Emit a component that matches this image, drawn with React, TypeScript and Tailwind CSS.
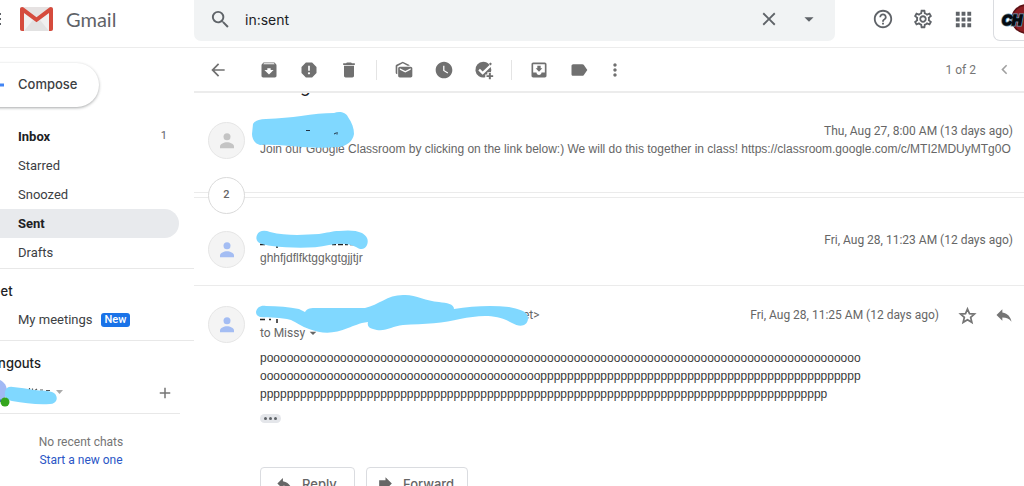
import type { ReactNode } from 'react'
import {
  MdAdd,
  MdApps,
  MdArchive,
  MdArrowBack,
  MdArrowDropDown,
  MdChevronLeft,
  MdClose,
  MdDelete,
  MdForward,
  MdHelpOutline,
  MdLabel,
  MdMarkAsUnread,
  MdMoreVert,
  MdMoveToInbox,
  MdOutlineSettings,
  MdReply,
  MdReport,
  MdSearch,
  MdWatchLater,
} from 'react-icons/md'

const BODY = 'p' + 'o'.repeat(89) + 'o'.repeat(42) + 'p'.repeat(48) + 'p'.repeat(85)
const BODY_LINES = [BODY.slice(0, 90), BODY.slice(90, 180), BODY.slice(180)]

function IconButton({ label, className = '', children }: { label: string; className?: string; children: ReactNode }) {
  return (
    <button type="button" aria-label={label} className={`flex h-10 w-10 shrink-0 items-center justify-center ${className}`}>
      {children}
    </button>
  )
}

function GmailLogo() {
  return (
    <svg viewBox="0 0 33 24" className="h-6 w-[33px] shrink-0" aria-hidden="true">
      <rect x="0" y="0" width="33" height="24" rx="2" fill="#e9e9e9" />
      <path d="M4 24V6l12.500 9L29 6v18z" fill="#f0f0f0" />
      <path d="M4 24l9-11 3.500 2.500L20 13l9 11z" fill="#e2e2e2" />
      <path d="M2 0L16.500 11 31 0z" fill="#e6e2e2" />
      <path d="M0 2.200C0 .9 1 0 2.200 0c.6 0 1 .2 1.400.5L16.500 10.300 29.400.5c.4-.3.8-.5 1.400-.5C32 0 33 .9 33 2.200V22c0 1.200-.8 2-2 2h-2V6L16.500 15.300 4 6v18H2c-1.200 0-2-.8-2-2z" fill="#d54b3d" />
    </svg>
  )
}

function AddTaskIcon() {
  return (
    <svg viewBox="0 0 24 24" className="h-5 w-5" fill="currentColor" aria-hidden="true">
      <path d="M11 2a9.500 9.500 0 1 0 2.500 18.700V17.500H16v-2.700h4.300A9.500 9.500 0 0 0 20 8.500l-9.600 9.200-5.200-5.200 1.900-1.900 3.300 3.300 8.200-8A9.500 9.500 0 0 0 11 2z" />
      <path d="M17.800 15.500h2.400v2.700H23v2.300h-2.800v2.700h-2.400v-2.700H15v-2.300h2.800zM18 4.500l2-1.500 1.500 1.700-2 2z" />
    </svg>
  )
}

function StarIcon() {
  return (
    <svg viewBox="0 0 24 24" className="h-[19px] w-[19px]" fill="none" stroke="currentColor" strokeWidth="2.200" aria-hidden="true">
      <path d="M12 3.800l2.500 5.900 6.300.5-4.800 4.200 1.500 6.200-5.500-3.300-5.500 3.300L8 14.400l-4.800-4.200 6.300-.5z" />
    </svg>
  )
}

function Avatar({ color }: { color: string }) {
  return (
    <div className={`flex h-[37px] w-[37px] shrink-0 items-center justify-center rounded-full border border-[#e6e6e6] bg-[#f4f4f4] ${color}`}>
      <svg viewBox="0 0 14 16" className="h-4 w-[14px]" fill="currentColor" aria-hidden="true">
        <circle cx="7" cy="3.700" r="3.500" />
        <path d="M0 15.200v-1.700C0 11 4 9.300 7 9.300s7 1.700 7 4.200v1.700z" />
      </svg>
    </div>
  )
}

function NavItem({ label, count, active, bold }: { label: string; count?: string; active?: boolean; bold?: boolean }) {
  return (
    <a
      href="#"
      className={`mr-[15px] flex h-[29px] items-center rounded-r-full pr-3 pl-[46px] text-[13px] ${active ? 'bg-[#e8eaed]' : ''} ${bold ? 'font-bold text-[#202124]' : 'text-[#3c4043]'}`}
    >
      <span className="flex-1">{label}</span>
      {count && <span className="text-[11px] font-normal text-[#5f6368]">{count}</span>}
    </a>
  )
}

function Sidebar() {
  return (
    <aside className="w-[194px] shrink-0 overflow-hidden">
      <div className="-ml-7 flex flex-col">
        <button
          type="button"
          className="mt-[15px] mb-[15px] flex h-[44px] w-[127px] items-center rounded-full pl-2 font-['Inter',sans-serif] text-[13px] font-medium text-[#3c4043] shadow-[0_1px_3px_rgba(60,64,67,0.45)]"
        >
          <svg viewBox="0 0 24 24" className="mr-[14px] h-6 w-6" aria-hidden="true">
            <path d="M0 10.500h24v3H0z" fill="#4285f4" />
          </svg>
          Compose
        </button>
        <nav className="flex flex-col pb-px">
          <NavItem label="Inbox" count="1" bold />
          <NavItem label="Starred" />
          <NavItem label="Snoozed" />
          <NavItem label="Sent" active bold />
          <NavItem label="Drafts" />
        </nav>
        <section className="border-y border-[#e8e8e8] pt-3 pb-[6px]">
          <h2 className="pl-[9px] font-['Inter',sans-serif] text-[13px] leading-5 font-medium text-[#202124]">Meet</h2>
          <a href="#" className="mt-1 flex h-[29px] items-center gap-2 pl-[46px] text-[13px] text-[#3c4043]">
            My meetings
            <span className="rounded-[3px] bg-[#1a73e8] px-1 text-[11px] leading-[14px] font-medium text-white">New</span>
          </a>
        </section>
        <section className="pt-3">
          <h2 className="pl-[9px] font-['Inter',sans-serif] text-[13px] leading-5 font-medium text-[#202124]">Hangouts</h2>
          <div className="relative mr-[14px] flex h-[41px] items-center justify-end border-b border-[#e8e8e8] pr-[6px] text-[#757575]">
            <svg viewBox="0 0 80 40" className="absolute top-0 left-7 h-10 w-20" aria-hidden="true">
              <circle cx="-5" cy="18" r="12" fill="#a1b9f5" />
              <path d="M-6 25q6-2 8 4H-6z" fill="#4169c9" />
              <path d="M26 17.500h2.500M29.500 15v3M32.500 15.500v2M35 17.500l2-1.500M40 17h3M46 17.500h4" stroke="#555" strokeWidth="1.200" />
              <path d="M5 19q1-6 8-5 11 1 21 3c7 1 15 0 20 3 5 4 3 11-4 11-13 1-25-1-38-3-5-1-8-4-7-9z" fill="#80d8ff" />
              <circle cx="5" cy="29" r="4.500" fill="#34a51d" />
              <path d="M56 17h7l-3.500 4z" fill="#aaa" />
            </svg>
            <button type="button" aria-label="New conversation">
              <MdAdd size={18} />
            </button>
          </div>
          <div className="mr-[14px] ml-7 flex flex-col items-center pt-[19px] pr-[18px] text-[12px] leading-[18px]">
            <span className="text-[#757575]">No recent chats</span>
            <a href="#" className="text-[#2a56c6]">Start a new one</a>
          </div>
        </section>
      </div>
    </aside>
  )
}

function Header() {
  return (
    <header className="flex h-12 shrink-0 border-b border-[#ececec]">
      <div className="flex h-[38px] w-[194px] shrink-0 items-center">
        <svg viewBox="0 0 2 14" className="mr-[18px] h-[14px] w-[2px] text-[#5f6368]" fill="currentColor" aria-hidden="true">
          <path d="M0 1h1v2H0zM0 6h1v2H0zM0 11h1v2H0z" />
        </svg>
        <GmailLogo />
        <span className="ml-[13px] font-['Lato',sans-serif] text-[20px] text-[#5f6368]">Gmail</span>
      </div>
      <form className="flex h-[41px] min-w-0 flex-1 items-center rounded-b-[7px] bg-[#f1f3f4] px-[6px] pb-[3px] text-[#5f6368]">
        <IconButton label="Search">
          <MdSearch size={23} />
        </IconButton>
        <input
          aria-label="Search mail"
          defaultValue="in:sent"
          className="ml-[5px] min-w-0 flex-1 bg-transparent font-['Inter',sans-serif] text-[14px] text-[#202124] outline-none"
        />
        <IconButton label="Clear search">
          <MdClose size={22} />
        </IconButton>
        <IconButton label="Search options">
          <MdArrowDropDown size={22} />
        </IconButton>
      </form>
      <div className="flex h-[41px] w-[189px] shrink-0 text-[#5f6368]">
        <div className="flex h-[38px] items-center pl-7">
          <IconButton label="Support">
            <MdHelpOutline size={22} />
          </IconButton>
          <IconButton label="Settings">
            <MdOutlineSettings size={22} />
          </IconButton>
          <IconButton label="Apps">
            <MdApps size={23} />
          </IconButton>
        </div>
        <div className="ml-auto h-full w-[31px] overflow-hidden rounded-bl-[7px] border-b border-l border-[#dadce0]">
          <svg viewBox="0 0 30 40" className="h-10 w-[30px]" role="img" aria-label="Account">
            <circle cx="32" cy="19" r="14" fill="#8c1d22" stroke="#5b1115" strokeWidth="1.500" />
            <g fontFamily="Liberation Sans, sans-serif" fontSize="14" fontWeight="700" fontStyle="italic">
              <text x="8" y="25" fill="#6d9bb3" stroke="#6d9bb3" strokeWidth="3" aria-hidden="true">
                CH
              </text>
              <text x="8" y="25" fill="#050a10" stroke="#050a10" strokeWidth="1.500">
                CH
              </text>
            </g>
          </svg>
        </div>
      </div>
    </header>
  )
}

function Toolbar() {
  return (
    <div className="relative z-10 flex h-[45px] shrink-0 items-center border-b-2 border-[#ececec] bg-white pl-1 text-[#707070]">
      <IconButton label="Back to Sent" className="mr-[11px]">
        <MdArrowBack size={20} />
      </IconButton>
      <IconButton label="Archive">
        <MdArchive size={20} />
      </IconButton>
      <IconButton label="Report spam">
        <MdReport size={20} />
      </IconButton>
      <IconButton label="Delete">
        <MdDelete size={20} />
      </IconButton>
      <div className="mx-[7px] h-5 w-px bg-[#e4e4e4]" />
      <IconButton label="Mark as unread">
        <MdMarkAsUnread size={20} />
      </IconButton>
      <IconButton label="Snooze">
        <MdWatchLater size={20} />
      </IconButton>
      <IconButton label="Add to tasks">
        <AddTaskIcon />
      </IconButton>
      <div className="mx-[7px] h-5 w-px bg-[#e4e4e4]" />
      <IconButton label="Move to">
        <MdMoveToInbox size={20} />
      </IconButton>
      <IconButton label="Labels">
        <MdLabel size={20} />
      </IconButton>
      <IconButton label="More" className="-mx-1">
        <MdMoreVert size={20} />
      </IconButton>
      <span className="ml-auto text-[12px] text-[#757575]">1 of 2</span>
      <IconButton label="Newer" className="ml-2 text-[#a0a0a0]">
        <MdChevronLeft size={19} />
      </IconButton>
    </div>
  )
}

function Conversation() {
  return (
    <div className="flex flex-col text-[12px] leading-[18px] text-[#666]">
      <h1 className="-mt-[17px] h-5 pl-[106px] text-[19px] leading-5 text-[#202124]">g</h1>

      <article className="relative flex h-24 gap-[15px] pt-[26px] pl-[14px]">
        <Avatar color="text-[#c4c4c4]" />
        <div className="min-w-0 flex-1">
          <div className="pr-[11px] text-right">Thu, Aug 27, 8:00 AM (13 days ago)</div>
          <p className="overflow-hidden font-['Liberation_Sans',sans-serif] whitespace-nowrap">
            Join our Google Classroom by clicking on the link below:) We will do this together in class!
            https://classroom.google.com/c/MTI2MDUyMTg0O
          </p>
        </div>
        <svg viewBox="250 108 110 44" className="absolute top-[13px] left-14 h-11 w-[110px]" aria-hidden="true">
          <path d="M253 123q3-5 13-5 20-1 35-3c12-2 23-3 33-3 5-2 12-1 14 4 4 6 6 11 6 17-1 7-7 12-15 13-12 1-24 1-37 0-15-1-27-3-42-2-5-1-8-6-8-11z" fill="#80d8ff" />
          <path d="M306 129.500h4M334 133l2-1M337 131v2.500" stroke="#234" />
        </svg>
      </article>

      <div className="relative flex h-[6px] items-center border-y border-[#ebebeb] pl-[14px]">
        <button type="button" aria-label="Show 2 older messages" className="flex h-[37px] w-[37px] shrink-0 items-center justify-center rounded-full border border-[#dadada] bg-white text-[11px] font-medium">
          2
        </button>
      </div>

      <article className="relative flex h-[88px] gap-[15px] border-b border-[#ebebeb] pt-[33px] pl-[14px]">
        <Avatar color="text-[#a4bdf3]" />
        <div className="min-w-0 flex-1">
          <div className="pr-[11px] text-right">Fri, Aug 28, 11:23 AM (12 days ago)</div>
          <p className="font-['Liberation_Sans',sans-serif]">ghhfjdflfktggkgtgjjtjr</p>
        </div>
        <svg viewBox="250 226 124 26" className="absolute top-[29px] left-14 h-[26px] w-[124px]" aria-hidden="true">
          <path d="M260 243.500h5M277 243v4M332 243.500h4M338 243.500h5M345 243.500h3M350 243.500h4" stroke="#222" strokeWidth="1.500" />
          <path d="M257 234c2-5 8-5 13-3 16 4 33 3 49 2 8-1 13-3 20-3 8-1 17-1 23 2 5 3 7 7 5 12-2 5-7 5-11 2-8-4-16-4-27-2-17 4-40 3-57 1-5-1-10-1-14-4-2-2-2-5-1-7z" fill="#80d8ff" />
        </svg>
      </article>

      <article className="relative flex gap-[15px] pt-5 pl-[14px]">
        <Avatar color="text-[#a4bdf3]" />
        <div className="min-w-0 flex-1">
          <div className="flex h-[18px] items-center">
            <span className="pl-[263px]">et&gt;</span>
            <span className="mr-2 ml-auto">Fri, Aug 28, 11:25 AM (12 days ago)</span>
            <IconButton label="Star" className="-mr-[3px] text-[#757575]">
              <StarIcon />
            </IconButton>
            <IconButton label="Reply to this message" className="text-[#757575]">
              <MdReply size={20} />
            </IconButton>
          </div>
          <button type="button" className="flex items-center">
            to Missy
            <MdArrowDropDown size={16} />
          </button>
          <div className="pt-[7px] font-['Liberation_Sans',sans-serif] text-[#3a3a3a]">
            {BODY_LINES.map((line, i) => (
              <p key={i}>{line}</p>
            ))}
          </div>
          <button type="button" aria-label="Show trimmed content" className="mt-[11px] flex h-[9px] w-[21px] items-center justify-center gap-[2px] rounded-full bg-[#e4e6ea]">
            <span className="h-[3px] w-[3px] rounded-full bg-[#5f6368]" />
            <span className="h-[3px] w-[3px] rounded-full bg-[#5f6368]" />
            <span className="h-[3px] w-[3px] rounded-full bg-[#5f6368]" />
          </button>
          <div className="mt-11 flex gap-[11px] font-['Inter',sans-serif] text-[13px] font-medium">
            <button type="button" className="flex h-[33px] w-[95px] items-center gap-2 rounded-[4px] border border-[#dadce0] pl-[14px]">
              <MdReply size={19} />
              Reply
            </button>
            <button type="button" className="flex h-[33px] w-[102px] items-center gap-2 rounded-[4px] border border-[#dadce0] pl-[9px]">
              <MdForward size={19} />
              Forward
            </button>
          </div>
        </div>
        <svg viewBox="250 290 284 46" className="absolute top-[5px] left-14 h-[46px] w-[284px]" aria-hidden="true">
          <path d="M260 318.500h5M269 318.500h2M277 318v4" stroke="#222" strokeWidth="1.500" />
          <path d="M256 311c1-5 5-7 10-6 12 0 23 1 33 3l6 3c2-4 6-4 12-4h48c14-3 22-13 38-13 12-1 22 6 36 7 8 1 15 2 15 7 18-3 38-4 55-2 9 2 20 4 19 12-1 8-9 8-16 4-18-10-34-7-52-4-15 4-36 5-57 6-12 1-18 8-30 4-4-1-6-3-5-7-9 1-14 4-20 6-14 6-26 6-39 1-7-2-13-7-18-9-11-3-20-2-31-3-3-1-4-3-4-5z" fill="#80d8ff" />
        </svg>
      </article>
    </div>
  )
}

export default function App() {
  return (
    <div className="flex h-screen flex-col overflow-hidden bg-white font-['Roboto',sans-serif]">
      <Header />
      <div className="flex min-h-0 flex-1">
        <Sidebar />
        <main className="min-w-0 flex-1 overflow-hidden">
          <Toolbar />
          <Conversation />
        </main>
      </div>
    </div>
  )
}
